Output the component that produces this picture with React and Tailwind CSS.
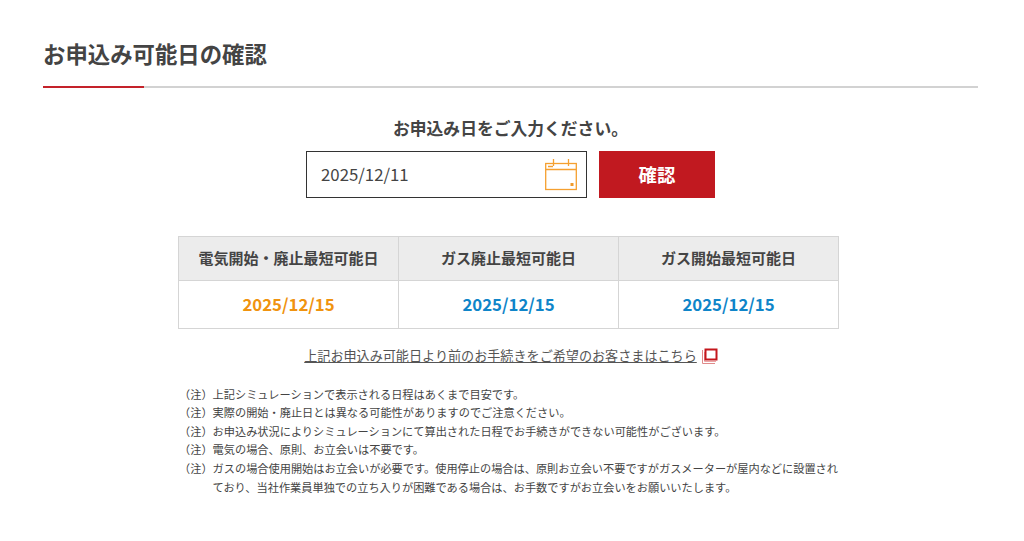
const font = { fontFamily: '"Noto Sans CJK JP", "Noto Sans", sans-serif' };

const notes = [
  "上記シミュレーションで表示される日程はあくまで目安です。",
  "実際の開始・廃止日とは異なる可能性がありますのでご注意ください。",
  "お申込み状況によりシミュレーションにて算出された日程でお手続きができない可能性がございます。",
  "電気の場合、原則、お立会いは不要です。",
  "ガスの場合使用開始はお立会いが必要です。使用停止の場合は、原則お立会い不要ですがガスメーターが屋内などに設置されており、当社作業員単独での立ち入りが困難である場合は、お手数ですがお立会いをお願いいたします。",
];

const cols = [
  { h: "電気開始・廃止最短可能日", d: "2025/12/15", c: "text-[#f0930f]" },
  { h: "ガス廃止最短可能日", d: "2025/12/15", c: "text-[#0f85c9]" },
  { h: "ガス開始最短可能日", d: "2025/12/15", c: "text-[#0f85c9]" },
];

function Calendar() {
  return (
    <svg width="32" height="32" viewBox="0 0 32 32" fill="none" stroke="#f5a030" strokeWidth="1.3" className="block">
      <rect x="0.7" y="4.5" width="30.6" height="26" />
      <path d="M0.7 10.5H31M8.5 0V7M23.5 0V7M3 7.5H8" />
      <rect x="25.5" y="24" width="3" height="3" fill="#f09a2a" stroke="none" />
    </svg>
  );
}

function ExternalIcon() {
  return (
    <svg width="16" height="16" viewBox="0 0 16 16" fill="none" className="block">
      <path d="M0.5 2V15.5H13" stroke="#e08a8a" strokeWidth="1" />
      <path d="M2.5 4V13.5H14" stroke="#eba6a6" strokeWidth="1" />
      <rect x="3.5" y="1.5" width="11" height="10" stroke="#c4161c" strokeWidth="2" />
    </svg>
  );
}

export default function App() {
  return (
    <div style={font} className="w-[1024px] h-[541px] bg-white text-[#333] overflow-hidden pt-[37px]">
      <div className="mx-[43px] w-[935px]">
        <h2 className="text-[22.4px] leading-[32px] font-bold text-[#444]">お申込み可能日の確認</h2>
        <div className="mt-[17px] h-[2px] bg-[#d2d2d2] flex">
          <div className="w-[101px] h-[2px] bg-[#c4222a]" />
        </div>

        <p className="mt-[28px] text-center text-[16.8px] leading-[24px] font-bold text-[#444]">お申込み日をご入力ください。</p>

        <div className="mt-[11px] flex justify-center gap-[12px]">
          <div className="w-[281px] h-[47px] border border-[#333] flex items-center justify-between pl-[14px] pr-[9px]">
            <span className="text-[16.8px] text-[#444]">2025/12/11</span>
            <Calendar />
          </div>
          <div className="w-[116px] h-[47px] bg-[#c11920] text-white text-[18.4px] font-bold flex items-center justify-center">確認</div>
        </div>

        <div className="mt-[38px] ml-[135px] w-[661px] grid grid-cols-3 border-t border-l border-[#d5d5d5]">
          {cols.map((c) => (
            <div key={c.h} className="h-[44px] bg-[#ececec] border-r border-b border-[#d5d5d5] flex items-center justify-center text-[15px] font-bold text-[#444]">{c.h}</div>
          ))}
          {cols.map((c, i) => (
            <div key={i} className={`h-[48px] border-r border-b border-[#d5d5d5] flex items-center justify-center text-[16.8px] font-bold ${c.c}`}>{c.d}</div>
          ))}
        </div>

        <div className="mt-[17px] flex justify-center items-center gap-[5px] pl-[1px]">
          <span className="text-[13.1px] leading-[20px] text-[#555] underline">上記お申込み可能日より前のお手続きをご希望のお客さまはこちら</span>
          <ExternalIcon />
        </div>

        <ul className="mt-[18.6px] ml-[136px] w-[662px] text-[11.2px] leading-[18.6px] text-[#444]">
          {notes.map((n, i) => (
            <li key={i} className="flex">
              <span className="shrink-0">（注）</span>
              <span className="flex-1">{n}</span>
            </li>
          ))}
        </ul>
      </div>
    </div>
  );
}
